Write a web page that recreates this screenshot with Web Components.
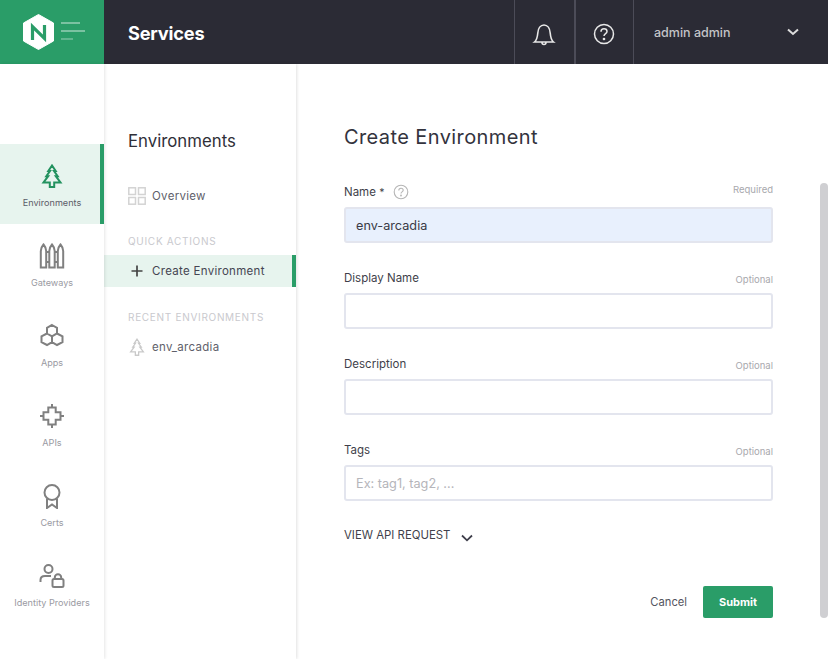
<![CDATA[<!DOCTYPE html>
<html><head><meta charset="utf-8"><style>
html,body{margin:0;padding:0;height:659px;overflow:hidden;background:#fff;font-family:"Inter","Liberation Sans",sans-serif}
</style></head><body>
<app-shell>
  <top-bar slot="top" title-text="Services" user="admin admin"></top-bar>
  <rail-nav slot="rail">
    <rail-item label="Environments" active><svg viewBox="0 0 24 24" width="24" height="24" fill="none" stroke="currentColor" stroke-width="2" stroke-linejoin="miter"><path d="M12 1.500 8.300 7H10L6.300 12.200H8.200L3.500 18.500H9.800V23H14.200V18.500H20.500L15.800 12.200H17.700L14 7H15.700Z"/></svg></rail-item>
    <rail-item label="Gateways"><svg viewBox="0 0 26 26" width="26" height="26" fill="none" stroke="currentColor" stroke-width="2"><path d="M1.800 24.500V8C1.800 5.500 3.200 3 4.500 1.500 5.800 3 7.200 5.500 7.200 8V24.500ZM10.300 24.500V8C10.300 5.500 11.700 3 13 1.500 14.300 3 15.700 5.500 15.700 8V24.500ZM18.800 24.500V8C18.800 5.500 20.200 3 21.500 1.500 22.800 3 24.200 5.500 24.200 8V24.500ZM7.200 9H10.300M15.700 9H18.800M7.200 19H10.300M15.700 19H18.800"/></svg></rail-item>
    <rail-item label="Apps"><svg viewBox="0 0 26 26" width="26" height="26" fill="none" stroke="currentColor" stroke-width="2"><path d="M13 2 18 4.900V10.500L13 13.400 8 10.500V4.900ZM8 10.500 13 13.400V19.100L8 22 2.500 19.100V13.400ZM18 10.500 23.500 13.400V19.100L18 22 13 19.100V13.400Z"/></svg></rail-item>
    <rail-item label="APIs"><svg viewBox="0 0 26 26" width="26" height="26" fill="none" stroke="currentColor" stroke-width="2"><path d="M9.300 4.500H16.700V9.300H21.500V16.700H16.700V21.500H9.300V16.700H4.500V9.300H9.300ZM13 1V4.500M13 21.500V25M1 13H4.500M21.500 13H25"/></svg></rail-item>
    <rail-item label="Certs"><svg viewBox="0 0 26 26" width="26" height="26" fill="none" stroke="currentColor" stroke-width="2"><circle cx="13" cy="9.500" r="7.500"/><path d="M8 15.500V25L13 21.500 18 25V15.500"/></svg></rail-item>
    <rail-item label="Identity Providers"><svg viewBox="0 0 26 26" width="26" height="26" fill="none" stroke="currentColor" stroke-width="2"><circle cx="9.500" cy="6" r="4"/><path d="M1.500 19V17C1.500 14.500 3.500 13 6 13H12"/><rect x="13.500" y="16" width="11" height="8" rx="1.500"/><path d="M15.800 16V14.500A3.200 3.200 0 0 1 22.200 14.500V16"/></svg></rail-item>
  </rail-nav>
  <side-nav slot="side"></side-nav>
  <env-form slot="main"></env-form>
</app-shell>
<script>
function el(name, html){
  customElements.define(name, class extends HTMLElement{
    connectedCallback(){
      if(this.shadowRoot) return;
      const r=this.attachShadow({mode:'open'});
      r.innerHTML=typeof html==='function'?html(this):html;
    }
  });
}
el('app-shell',`<style>
:host{display:grid;grid-template-columns:104px 192px 1fr;grid-template-rows:64px 595px;width:828px;height:659px;position:relative;overflow:hidden}
.top{grid-column:1/-1}
.bar{position:absolute;right:0;top:183px;width:8px;height:435px;background:#cfcfd2;border-radius:4px}
</style>
<div class="top"><slot name="top"></slot></div>
<slot name="rail"></slot><slot name="side"></slot><slot name="main"></slot><div class="bar"></div>`);
el('top-bar',h=>`<style>
:host{display:flex;height:64px;background:#2b2b35;color:#fff}
.logo{width:104px;box-sizing:border-box;padding-left:4px;background:#2a9d68;display:flex;align-items:center;justify-content:center}
.t{font:700 18.200px/67px "Inter",sans-serif;padding-left:24px;flex:1;letter-spacing:-.2px}
.cell{width:59px;border-left:1px solid #4c4c58;display:flex;align-items:center;justify-content:center;padding-top:3px;box-sizing:content-box}
.user{width:195px;box-sizing:border-box;border-left:1px solid #4c4c58;display:flex;align-items:center;justify-content:space-between;padding:0 29px 0 20px;font:500 12.500px "Inter",sans-serif;color:#c4c4c8}
</style>
<div class="logo"><svg width="62" height="36" viewBox="0 0 62 36"><path d="M15.500 .5 30.500 9V27L15.500 35.500 .5 27V9Z" fill="#fff" stroke="#fff" stroke-width="1" stroke-linejoin="round"/><path d="M9.500 26V12.500L21.500 24.500V11" fill="none" stroke="#2a9d68" stroke-width="3.200"/><path d="M38 9H57M38 17H62" stroke="#fff" stroke-opacity=".5" stroke-width="1.500"/><path d="M38 25H50" stroke="#fff" stroke-opacity=".35" stroke-width="1.500"/></svg></div>
<div class="t">${h.getAttribute('title-text')}</div>
<div class="cell"><svg width="24" height="24" viewBox="0 0 24 24" fill="none" stroke="#e8e8e8" stroke-width="1.600" style="margin-left:-2px"><path d="M2.500 20C5 18 5.500 14.500 5.800 11 6.100 6.500 8.500 3 12 3S17.900 6.500 18.200 11C18.500 14.500 19 18 21.500 20ZM10 20.500A2 2 0 0 0 14 20.500"/></svg></div>
<div class="cell" style="width:57px;border-left-width:2px"><svg width="22" height="22" viewBox="0 0 22 22" fill="none" stroke="#e8e8e8" stroke-width="1.500" style="margin-left:-2px"><circle cx="11" cy="11" r="9.500"/><path d="M8 8.700C8 6.800 9.400 5.800 11 5.800S14 6.800 14 8.500C14 10.700 11 10.700 11 13"/><circle cx="11" cy="16" r=".6" fill="#e8e8e8"/></svg></div>
<div class="user"><span>${h.getAttribute('user')}</span><svg width="12" height="8" viewBox="0 0 12 8" fill="none" stroke="#ddd" stroke-width="2"><path d="M1 1.500 6 6 11 1.500"/></svg></div>`);
el('rail-nav',`<style>
:host{display:block;padding-top:80px;box-shadow:1px 0 3px rgba(0,0,0,.1);position:relative;z-index:2;background:#fff}
</style><slot></slot>`);
el('rail-item',h=>`<style>
:host{display:flex;flex-direction:column;align-items:center;box-sizing:border-box;height:80px;padding-top:19px;color:#808080;font:400 9.100px "Inter",sans-serif;position:relative}
:host([active]){background:#e7f4ee;color:#23925f;box-shadow:inset -4px 0 0 #2a9d68}
.i{height:26px;display:flex;align-items:center;justify-content:center}
.l{margin-top:7px;color:#9a9aa2;white-space:nowrap;line-height:14px}
:host([active]) .l{color:#5c5c68}
</style><div class="i"><slot></slot></div><div class="l">${h.getAttribute('label')}</div>`);
el('side-nav',`<style>
:host{display:block;box-shadow:1px 0 3px rgba(0,0,0,.12);position:relative;z-index:1;font-family:"Inter",sans-serif;background:#fff;padding-top:66px}
h2{margin:0 0 0 24px;font:400 16.800px/22px "Inter",sans-serif;color:#2f2f38}
.row{display:flex;align-items:center;height:32px;padding-left:24px;font-size:11.500px;letter-spacing:.3px;color:#5f5f6b;gap:6px;box-sizing:border-box}
.row svg{flex:none}
.ov{margin-top:28px}
.cap{font-size:10px;letter-spacing:.7px;color:#c9c9ce;padding-left:24px;line-height:12px;margin-top:23px;margin-bottom:8px}
.rec{margin-top:24px;margin-bottom:8px}
.act{background:#e7f4ee;box-shadow:inset -4px 0 0 #2a9d68;color:#454552}
.act svg{margin-left:1px;margin-right:1px}
</style>
<h2>Environments</h2>
<div class="row ov"><svg width="18" height="18" viewBox="0 0 18 18" fill="none" stroke="#d3d3d3" stroke-width="1.500"><rect x=".8" y=".8" width="6.700" height="6.700"/><rect x="10.500" y=".8" width="6.700" height="6.700"/><rect x=".8" y="10.500" width="6.700" height="6.700"/><rect x="10.500" y="10.500" width="6.700" height="6.700"/></svg><span>Overview</span></div>
<div class="cap">QUICK ACTIONS</div>
<div class="row act"><svg width="16" height="16" viewBox="0 0 16 16" stroke="#444" stroke-width="1.700"><path d="M8 2.500V13.500M2.500 8H13.500"/></svg><span>Create Environment</span></div>
<div class="cap rec">RECENT ENVIRONMENTS</div>
<div class="row"><svg width="18" height="18" viewBox="0 0 24 24" fill="none" stroke="#c9c9c9" stroke-width="1.700"><path d="M12 1.500 8.300 7H10L6.300 12.200H8.200L3.500 18.500H9.800V23H14.200V18.500H20.500L15.800 12.200H17.700L14 7H15.700Z"/></svg><span>env_arcadia</span></div>`);
el('form-field',h=>`<style>
:host{display:block;height:86px}
.head{display:flex;justify-content:space-between;align-items:center;height:20px;font:400 11.500px "Inter",sans-serif;color:#3f3f4a;margin-bottom:5px}
.hint{font-size:9.500px;color:#a8a8ad;font-weight:400;padding-top:2px}
.hint.up{align-self:flex-start;padding-top:0;margin-top:2px}
.lab{display:flex;align-items:center;gap:9px}
.box{height:36px;box-sizing:border-box;border:2px solid #e3e5ee;border-radius:3px;padding-left:10px;display:flex;align-items:center;font:400 12.700px "Inter",sans-serif;color:#3a3a46}
.box.f{background:#e8f0fd}
.ph{color:#b5b5ba}
</style><div class="head"><span class="lab"><slot></slot></span><span class="hint ${h.hasAttribute('value')?'up':''}">${h.getAttribute('hint')}</span></div>
<div class="box ${h.hasAttribute('value')?'f':''}">${h.getAttribute('value')||(h.getAttribute('placeholder')?`<span class="ph">${h.getAttribute('placeholder')}</span>`:'')}</div>`);
el('env-form',`<style>
:host{display:block;padding:60px 55px 0 48px;font-family:"Inter",sans-serif;box-sizing:border-box}
h1{margin:0 0 32px;font:400 20px/26px "Inter",sans-serif;color:#33333d;letter-spacing:.4px}
.api{display:flex;align-items:center;gap:11px;font:400 11.400px/16px "Inter",sans-serif;color:#3f3f4b;margin-top:1px}
.api svg{position:relative;top:3px}
.acts{display:flex;justify-content:flex-end;align-items:center;margin-top:43px;gap:16px}
.cancel{font:400 11.200px "Inter",sans-serif;color:#55555f}
.sub{width:70px;height:32px;border-radius:2px;background:#2a9d68;color:#fff;font:700 11px/32px "Inter",sans-serif;text-align:center}
small{font-size:10.500px;line-height:0}
</style>
<h1>Create Environment</h1>
<form-field hint="Required" value="env-arcadia"><span>Name <small>*</small></span><svg width="16" height="16" viewBox="0 0 16 16" fill="none" stroke="#b5b5b5" stroke-width="1.100"><circle cx="8" cy="8" r="6.800"/><path d="M5.800 6.400C5.800 5 6.800 4.300 8 4.300S10.200 5 10.200 6.300C10.200 7.900 8 7.900 8 9.500"/><circle cx="8" cy="11.500" r=".4"/></svg></form-field>
<form-field hint="Optional">Display Name</form-field>
<form-field hint="Optional">Description</form-field>
<form-field hint="Optional" placeholder="Ex: tag1, tag2, ...">Tags</form-field>
<div class="api"><span>VIEW API REQUEST</span><svg width="12" height="8" viewBox="0 0 12 8" fill="none" stroke="#3f3f4b" stroke-width="1.800"><path d="M1 1.500 6 6.300 11 1.500"/></svg></div>
<div class="acts"><span class="cancel">Cancel</span><span class="sub">Submit</span></div>`);
</script>
</body></html>]]>
